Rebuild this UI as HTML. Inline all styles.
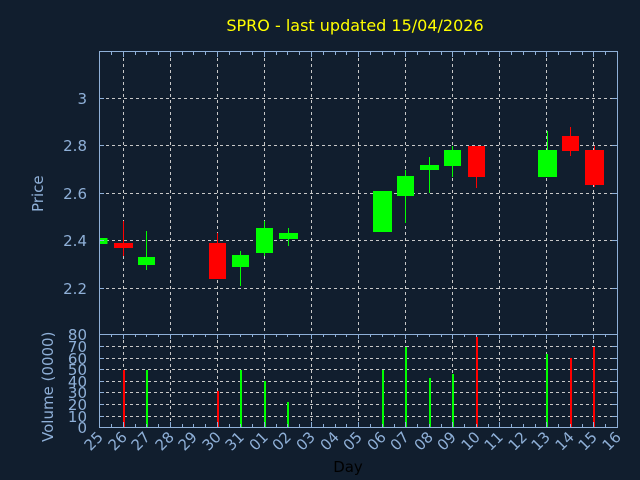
<!DOCTYPE html>
<html><head><meta charset="utf-8"><style>
html,body{margin:0;padding:0;background:#111e2e;}
svg{display:block;font-family:"DejaVu Sans","Liberation Sans",sans-serif;}
</style></head><body>
<svg width="640" height="480" viewBox="0 0 640 480" xmlns="http://www.w3.org/2000/svg">
<rect width="640" height="480" fill="#111e2e"/>
<text x="355" y="31" fill="#ffff00" font-size="16" text-anchor="middle">SPRO - last updated 15/04/2026</text>
<g stroke="#c8c8c8" stroke-width="1" stroke-dasharray="3,3">
<line x1="100" y1="98.5" x2="617" y2="98.5"/><line x1="100" y1="145.5" x2="617" y2="145.5"/>
<line x1="100" y1="193.5" x2="617" y2="193.5"/><line x1="100" y1="240.5" x2="617" y2="240.5"/>
<line x1="100" y1="288.5" x2="617" y2="288.5"/>
<line x1="100" y1="346.5" x2="617" y2="346.5"/><line x1="100" y1="358.5" x2="617" y2="358.5"/>
<line x1="100" y1="369.5" x2="617" y2="369.5"/><line x1="100" y1="381.5" x2="617" y2="381.5"/>
<line x1="100" y1="392.5" x2="617" y2="392.5"/><line x1="100" y1="404.5" x2="617" y2="404.5"/>
<line x1="100" y1="416.5" x2="617" y2="416.5"/>
<path d="M123.5 52V427M170.5 52V427M217.5 52V427M264.5 52V427M311.5 52V427M358.5 52V427M405.5 52V427M452.5 52V427M499.5 52V427M546.5 52V427M593.5 52V427"/>
</g>
<g fill="#00ff00" stroke="#00ff00">
<rect x="99.5" y="238" width="8" height="6" stroke="none"/>
<line x1="146.5" y1="231" x2="146.5" y2="270"/><rect x="138" y="257" width="17" height="8" stroke="none"/>
<line x1="240.5" y1="251" x2="240.5" y2="286"/><rect x="232" y="255" width="17" height="12" stroke="none"/>
<line x1="264.5" y1="221" x2="264.5" y2="256"/><rect x="256" y="228" width="17" height="25" stroke="none"/>
<line x1="288.5" y1="228" x2="288.5" y2="246"/><rect x="279" y="233" width="19" height="6" stroke="none"/>
<rect x="373" y="191" width="19" height="41" stroke="none"/>
<line x1="405.5" y1="170" x2="405.5" y2="223"/><rect x="397" y="176" width="17" height="20" stroke="none"/>
<line x1="429.5" y1="157" x2="429.5" y2="193"/><rect x="420" y="165" width="19" height="5" stroke="none"/>
<line x1="452.5" y1="146" x2="452.5" y2="177"/><rect x="444" y="150" width="17" height="16" stroke="none"/>
<line x1="547.5" y1="131" x2="547.5" y2="150"/><rect x="538" y="150" width="19" height="27" stroke="none"/>
</g>
<g fill="#ff0000" stroke="#ff0000">
<line x1="123.5" y1="221" x2="123.5" y2="256"/><rect x="114" y="243" width="19" height="5" stroke="none"/>
<line x1="217.5" y1="233" x2="217.5" y2="243"/><rect x="209" y="243" width="17" height="36" stroke="none"/>
<line x1="476.5" y1="177" x2="476.5" y2="188"/><rect x="468" y="146" width="17" height="31" stroke="none"/>
<line x1="570.5" y1="127" x2="570.5" y2="156"/><rect x="562" y="136" width="17" height="15" stroke="none"/>
<line x1="594.5" y1="146" x2="594.5" y2="187"/><rect x="585" y="150" width="19" height="35" stroke="none"/>
</g>
<g>
<rect x="123" y="370" width="2" height="57" fill="#ff0000"/>
<rect x="146" y="370" width="2" height="57" fill="#00ff00"/>
<rect x="217" y="391" width="2" height="36" fill="#ff0000"/>
<rect x="240" y="370" width="2" height="57" fill="#00ff00"/>
<rect x="264" y="381" width="2" height="46" fill="#00ff00"/>
<rect x="287" y="402" width="2" height="25" fill="#00ff00"/>
<rect x="382" y="370" width="2" height="57" fill="#00ff00"/>
<rect x="405" y="347" width="2" height="80" fill="#00ff00"/>
<rect x="429" y="378" width="2" height="49" fill="#00ff00"/>
<rect x="452" y="374" width="2" height="53" fill="#00ff00"/>
<rect x="476" y="337" width="2" height="90" fill="#ff0000"/>
<rect x="546" y="354" width="2" height="73" fill="#00ff00"/>
<rect x="570" y="358" width="2" height="69" fill="#ff0000"/>
<rect x="593" y="347" width="2" height="80" fill="#ff0000"/>
</g>
<g stroke="#8fb0d8" fill="none" stroke-width="1">
<rect x="99.5" y="51.5" width="518" height="376"/>
<line x1="99.5" y1="334.5" x2="617.5" y2="334.5"/>
<path d="M99 98.5h5M99 145.5h5M99 193.5h5M99 240.5h5M99 288.5h5M617 98.5h-5M617 145.5h-5M617 193.5h-5M617 240.5h-5M617 288.5h-5"/>
<path d="M99 346.5h5M99 358.5h5M99 369.5h5M99 381.5h5M99 392.5h5M99 404.5h5M99 416.5h5M617 346.5h-5M617 358.5h-5M617 369.5h-5M617 381.5h-5M617 392.5h-5M617 404.5h-5M617 416.5h-5"/>
<path d="M111.5 52v3M123.5 52v5M135.5 52v3M146.5 52v3M158.5 52v3M170.5 52v5M182.5 52v3M193.5 52v3M205.5 52v3M217.5 52v5M229.5 52v3M240.5 52v3M252.5 52v3M264.5 52v5M276.5 52v3M287.5 52v3M299.5 52v3M311.5 52v5M323.5 52v3M335.5 52v3M346.5 52v3M358.5 52v5M370.5 52v3M382.5 52v3M394.5 52v3M405.5 52v5M417.5 52v3M429.5 52v3M441.5 52v3M452.5 52v5M464.5 52v3M476.5 52v3M488.5 52v3M499.5 52v5M511.5 52v3M523.5 52v3M535.5 52v3M546.5 52v5M558.5 52v3M570.5 52v3M582.5 52v3M593.5 52v5M605.5 52v3"/>
<path d="M111.5 334v3M123.5 334v5M135.5 334v3M146.5 334v3M158.5 334v3M170.5 334v5M182.5 334v3M193.5 334v3M205.5 334v3M217.5 334v5M229.5 334v3M240.5 334v3M252.5 334v3M264.5 334v5M276.5 334v3M287.5 334v3M299.5 334v3M311.5 334v5M323.5 334v3M335.5 334v3M346.5 334v3M358.5 334v5M370.5 334v3M382.5 334v3M394.5 334v3M405.5 334v5M417.5 334v3M429.5 334v3M441.5 334v3M452.5 334v5M464.5 334v3M476.5 334v3M488.5 334v3M499.5 334v5M511.5 334v3M523.5 334v3M535.5 334v3M546.5 334v5M558.5 334v3M570.5 334v3M582.5 334v3M593.5 334v5M605.5 334v3"/>
<path d="M111.5 427v-3M123.5 427v-5M135.5 427v-3M146.5 427v-3M158.5 427v-3M170.5 427v-5M182.5 427v-3M193.5 427v-3M205.5 427v-3M217.5 427v-5M229.5 427v-3M240.5 427v-3M252.5 427v-3M264.5 427v-5M276.5 427v-3M287.5 427v-3M299.5 427v-3M311.5 427v-5M323.5 427v-3M335.5 427v-3M346.5 427v-3M358.5 427v-5M370.5 427v-3M382.5 427v-3M394.5 427v-3M405.5 427v-5M417.5 427v-3M429.5 427v-3M441.5 427v-3M452.5 427v-5M464.5 427v-3M476.5 427v-3M488.5 427v-3M499.5 427v-5M511.5 427v-3M523.5 427v-3M535.5 427v-3M546.5 427v-5M558.5 427v-3M570.5 427v-3M582.5 427v-3M593.5 427v-5M605.5 427v-3"/>
</g>
<g fill="#8fb0d8" font-size="15" text-anchor="end">
<text x="87" y="104">3</text><text x="87" y="151">2.8</text><text x="87" y="199">2.6</text>
<text x="87" y="246">2.4</text><text x="87" y="294">2.2</text>
<text x="87" y="340">80</text><text x="87" y="352">70</text><text x="87" y="364">60</text>
<text x="87" y="375">50</text><text x="87" y="387">40</text><text x="87" y="398">30</text>
<text x="87" y="410">20</text><text x="87" y="422">10</text><text x="87" y="433">0</text>
</g>
<text transform="translate(43,212) rotate(-90)" fill="#8fb0d8" font-size="15">Price</text>
<text transform="translate(53,442) rotate(-90)" fill="#8fb0d8" font-size="15">Volume (0000)</text>
<g fill="#8fb0d8" font-size="15" text-anchor="end">
<text transform="translate(104,438) rotate(-45)">25</text>
<text transform="translate(128,438) rotate(-45)">26</text>
<text transform="translate(151,438) rotate(-45)">27</text>
<text transform="translate(175,438) rotate(-45)">28</text>
<text transform="translate(198,438) rotate(-45)">29</text>
<text transform="translate(222,438) rotate(-45)">30</text>
<text transform="translate(245,438) rotate(-45)">31</text>
<text transform="translate(269,438) rotate(-45)">01</text>
<text transform="translate(292,438) rotate(-45)">02</text>
<text transform="translate(316,438) rotate(-45)">03</text>
<text transform="translate(340,438) rotate(-45)">04</text>
<text transform="translate(363,438) rotate(-45)">05</text>
<text transform="translate(387,438) rotate(-45)">06</text>
<text transform="translate(410,438) rotate(-45)">07</text>
<text transform="translate(434,438) rotate(-45)">08</text>
<text transform="translate(457,438) rotate(-45)">09</text>
<text transform="translate(481,438) rotate(-45)">10</text>
<text transform="translate(504,438) rotate(-45)">11</text>
<text transform="translate(528,438) rotate(-45)">12</text>
<text transform="translate(551,438) rotate(-45)">13</text>
<text transform="translate(575,438) rotate(-45)">14</text>
<text transform="translate(598,438) rotate(-45)">15</text>
<text transform="translate(622,438) rotate(-45)">16</text>
</g>
<text x="348" y="472" fill="#000000" font-size="15" text-anchor="middle">Day</text>
</svg>
</body></html>
